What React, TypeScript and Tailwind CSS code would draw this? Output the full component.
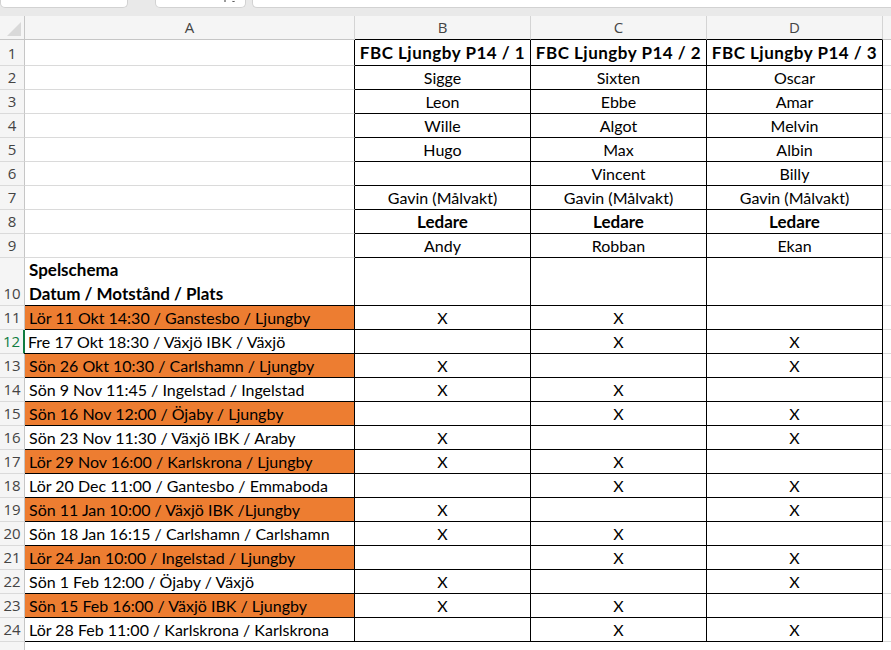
import React from "react";

type Row = {
  n: number;
  h: number;
  a?: React.ReactNode;
  cells: string[];
  bold?: boolean;
  orange?: boolean;
  framed: boolean; // black border around column A
};

const games: [string, string, string, string][] = [
  ["Lör 11 Okt 14:30 / Ganstesbo / Ljungby", "X", "X", ""],
  ["Fre 17 Okt 18:30 / Växjö IBK / Växjö", "", "X", "X"],
  ["Sön 26 Okt 10:30 / Carlshamn / Ljungby", "X", "", "X"],
  ["Sön 9 Nov 11:45 / Ingelstad / Ingelstad", "X", "X", ""],
  ["Sön 16 Nov 12:00 / Öjaby / Ljungby", "", "X", "X"],
  ["Sön 23 Nov 11:30 / Växjö IBK / Araby", "X", "", "X"],
  ["Lör 29 Nov 16:00 / Karlskrona / Ljungby", "X", "X", ""],
  ["Lör 20 Dec 11:00 / Gantesbo / Emmaboda", "", "X", "X"],
  ["Sön 11 Jan 10:00 / Växjö IBK /Ljungby", "X", "", "X"],
  ["Sön 18 Jan 16:15 / Carlshamn / Carlshamn", "X", "X", ""],
  ["Lör 24 Jan 10:00 / Ingelstad / Ljungby", "", "X", "X"],
  ["Sön 1 Feb 12:00 / Öjaby / Växjö", "X", "", "X"],
  ["Sön 15 Feb 16:00 / Växjö IBK / Ljungby", "X", "X", ""],
  ["Lör 28 Feb 11:00 / Karlskrona / Karlskrona", "", "X", "X"],
];

const rows: Row[] = [
  { n: 1, h: 26, cells: ["FBC Ljungby P14 / 1", "FBC Ljungby P14 / 2", "FBC Ljungby P14 / 3"], bold: true, framed: false },
  { n: 2, h: 24, cells: ["Sigge", "Sixten", "Oscar"], framed: false },
  { n: 3, h: 24, cells: ["Leon", "Ebbe", "Amar"], framed: false },
  { n: 4, h: 24, cells: ["Wille", "Algot", "Melvin"], framed: false },
  { n: 5, h: 24, cells: ["Hugo", "Max", "Albin"], framed: false },
  { n: 6, h: 24, cells: ["", "Vincent", "Billy"], framed: false },
  { n: 7, h: 24, cells: ["Gavin (Målvakt)", "Gavin (Målvakt)", "Gavin (Målvakt)"], framed: false },
  { n: 8, h: 24, cells: ["Ledare", "Ledare", "Ledare"], bold: true, framed: false },
  { n: 9, h: 24, cells: ["Andy", "Robban", "Ekan"], framed: false },
  {
    n: 10,
    h: 48,
    a: (
      <div className="flex flex-col text-[17px] font-bold leading-[24px]">
        <span>Spelschema</span>
        <span>Datum / Motstånd / Plats</span>
      </div>
    ),
    cells: ["", "", ""],
    framed: true,
  },
  ...games.map(([a, b, c, d], i) => ({
    n: 11 + i,
    h: 24,
    a,
    cells: [b, c, d],
    orange: i % 2 === 0,
    framed: true,
  })),
];

const colHeads = ["A", "B", "C", "D"];
const widths = ["w-[330px]", "w-[176px]", "w-[176px]", "w-[176px]"];

function Toolbar() {
  return (
    <div className="flex h-[8px] items-end bg-[#e9e9e9]">
      <div className="h-[8px] w-[128px] rounded-b-[5px] border border-t-0 border-[#d2d2d2] bg-white" />
      <div className="ml-[27px] flex h-[8px] w-[91px] items-start justify-end rounded-b-[5px] border border-t-0 border-[#d2d2d2] bg-white pr-[10px]">
        <div className="mt-[-1px] flex gap-[6px]">
          <span className="h-[3px] w-[2px] bg-[#9a9a9a]" />
          <span className="h-[3px] w-[3px] rounded-b-full border-b border-[#555]" />
        </div>
      </div>
      <div className="ml-[6px] h-[8px] flex-1 rounded-bl-[5px] border border-t-0 border-r-0 border-[#d2d2d2] bg-white" />
    </div>
  );
}

export default function App() {
  return (
    <div className="h-[650px] w-[891px] overflow-hidden bg-white font-['Lato',sans-serif] text-[16px] text-black">
      <Toolbar />
      <div className="h-[8px] bg-[#e9e9e9]" />
      {/* kolumnrubriker */}
      <div className="flex h-[24px] bg-[#f5f5f5] font-['Open_Sans',sans-serif] text-[15px] text-[#444]">
        <div className="relative w-[25px] shrink-0 border-b border-r border-[#c6c6c6]">
          <div className="absolute bottom-[3px] right-[3px] h-0 w-0 border-b-[14px] border-l-[14px] border-b-[#d9d9d9] border-l-transparent" />
        </div>
        {colHeads.map((c, i) => (
          <div
            key={c}
            className={`${widths[i]} flex shrink-0 items-center justify-center border-r border-[#d4d4d4] ${
              i === 0 ? "border-b border-b-[#c6c6c6]" : "border-b border-b-black"
            }`}
          >
            {c}
          </div>
        ))}
        <div className="flex-1 border-b border-[#c6c6c6]" />
      </div>

      {rows.map((r) => {
        const active = r.n === 12;
        return (
          <div key={r.n} className="flex" style={{ height: r.h }}>
            <div
              className={`flex w-[25px] shrink-0 items-end justify-center border-b border-[#dadada] bg-[#f5f5f5] pb-[1px] font-['Open_Sans',sans-serif] text-[15px] ${
                active ? "border-r-2 border-r-[#107c41] text-[#107c41]" : "border-r border-r-[#c6c6c6] text-[#444]"
              }`}
            >
              {r.n}
            </div>
            <div
              className={`flex shrink-0 items-center border-r border-r-black pl-[4px] ${
                r.framed ? "border-b border-b-black" : "border-b border-b-[#dadada]"
              } ${r.orange ? "bg-[#ed7d31]" : ""} ${active ? "-ml-[1px] w-[331px]" : "w-[330px]"}`}
            >
              {r.a}
            </div>
            {r.cells.map((c, i) => (
              <div
                key={i}
                className={`${widths[i + 1]} flex shrink-0 items-center justify-center border-b border-r border-black ${
                  r.bold ? "text-[17px] font-bold" : ""
                } ${r.n === 1 ? "tracking-[0.5px]" : ""}`}
              >
                {c}
              </div>
            ))}
            <div className="flex-1 border-b border-[#dadada]" />
          </div>
        );
      })}
      <div className="flex h-[20px]">
        <div className="w-[25px] shrink-0 border-r border-[#c6c6c6] bg-[#f5f5f5]" />
        <div className="flex-1" />
      </div>
    </div>
  );
}
